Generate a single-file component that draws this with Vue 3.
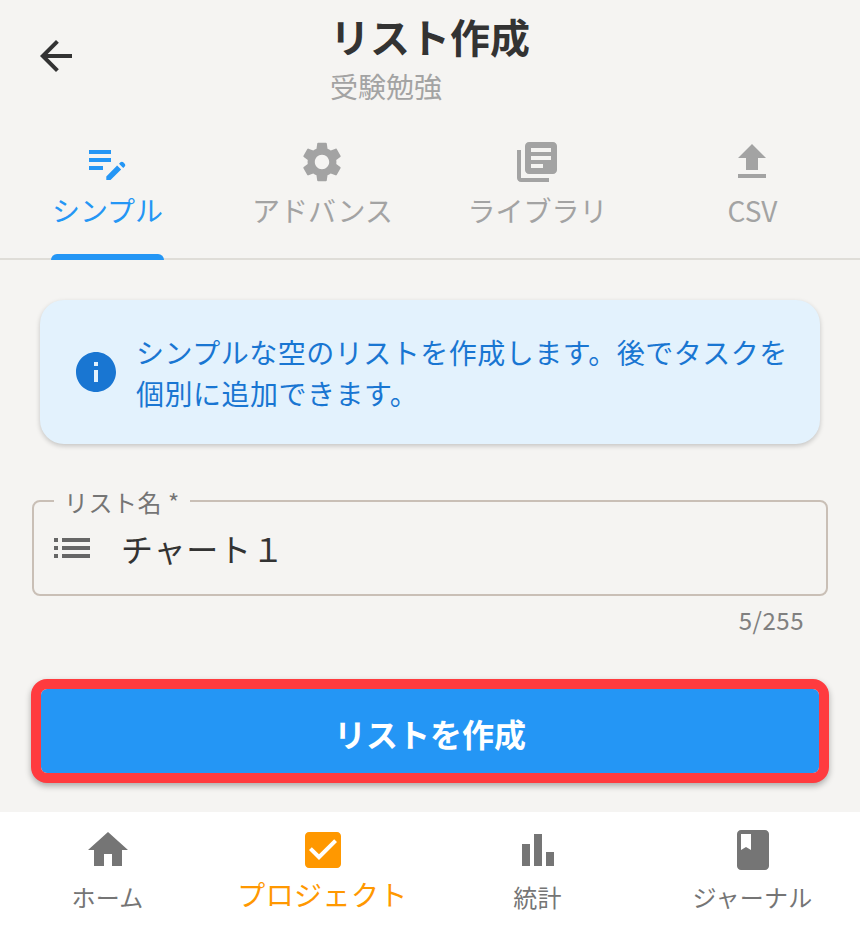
<template>
  <div class="page">
    <header class="top">
      <button class="back" aria-label="戻る">
        <svg viewBox="0 0 24 24" class="ic"><path :d="icons.back" /></svg>
      </button>
      <div class="titles">
        <h1>リスト作成</h1>
        <p>受験勉強</p>
      </div>
    </header>

    <nav class="tabs">
      <div v-for="t in tabs" :key="t.label" class="tab" :class="{ active: t.active }">
        <svg viewBox="0 0 24 24" class="ic"><path :d="t.icon" /></svg>
        <span>{{ t.label }}</span>
        <i v-if="t.active" class="bar"></i>
      </div>
    </nav>

    <main class="content">
      <section class="info">
        <svg viewBox="0 0 24 24" class="ic"><path :d="icons.info" /></svg>
        <p>シンプルな空のリストを作成します。後でタスクを個別に追加できます。</p>
      </section>

      <div class="field">
        <label>リスト名 *</label>
        <svg viewBox="0 0 24 24" class="ic"><path :d="icons.list" /></svg>
        <span class="value">チャート１</span>
      </div>
      <div class="count">5/255</div>

      <button class="submit">リストを作成</button>
    </main>

    <footer class="nav">
      <div v-for="n in nav" :key="n.label" class="nav-item" :class="{ on: n.on }">
        <svg viewBox="0 0 24 24" class="ic"><path :d="n.icon" /></svg>
        <span>{{ n.label }}</span>
      </div>
    </footer>
  </div>
</template>

<script setup>
const icons = {
  back: 'M20 11H7.83l5.59-5.59L12 4l-8 8 8 8 1.41-1.41L7.83 13H20v-2z',
  info: 'M12 2C6.48 2 2 6.48 2 12s4.48 10 10 10 10-4.48 10-10S17.52 2 12 2zm1 15h-2v-6h2v6zm0-8h-2V7h2v2z',
  list: 'M3 13h2v-2H3v2zm0 4h2v-2H3v2zm0-8h2V7H3v2zm4 4h14v-2H7v2zm0 4h14v-2H7v2zM7 7v2h14V7H7z'
}

const tabs = [
  {
    label: 'シンプル',
    active: true,
    icon: 'M3 10h11v2H3v-2zm0-2h11V6H3v2zm0 8h7v-2H3v2zm15.01-3.13.71-.71c.39-.39 1.02-.39 1.41 0l.71.71c.39.39.39 1.02 0 1.41l-.71.71-2.12-2.12zm-1.06 1.06-5.3 5.3V21h2.12l5.3-5.3-2.12-2.12z'
  },
  {
    label: 'アドバンス',
    icon: 'M19.14 12.94c.04-.3.06-.61.06-.94 0-.32-.02-.64-.07-.94l2.03-1.58c.18-.14.23-.41.12-.61l-1.92-3.32c-.12-.22-.37-.29-.59-.22l-2.39.96c-.5-.38-1.03-.7-1.62-.94l-.36-2.54c-.04-.24-.24-.41-.48-.41h-3.84c-.24 0-.43.17-.47.41l-.36 2.54c-.59.24-1.13.57-1.62.94l-2.39-.96c-.22-.08-.47 0-.59.22L2.74 8.87c-.12.21-.08.47.12.61l2.03 1.58c-.05.3-.09.63-.09.94s.02.64.07.94l-2.03 1.58c-.18.14-.23.41-.12.61l1.92 3.32c.12.22.37.29.59.22l2.39-.96c.5.38 1.03.7 1.62.94l.36 2.54c.05.24.24.41.48.41h3.84c.24 0 .44-.17.47-.41l.36-2.54c.59-.24 1.13-.56 1.62-.94l2.39.96c.22.08.47 0 .59-.22l1.92-3.32c.12-.22.07-.47-.12-.61l-2.01-1.58zM12 15.6c-1.98 0-3.6-1.62-3.6-3.6s1.62-3.6 3.6-3.6 3.6 1.62 3.6 3.6-1.62 3.6-3.6 3.6z'
  },
  {
    label: 'ライブラリ',
    icon: 'M4 6H2v14c0 1.1.9 2 2 2h14v-2H4V6zm16-4H8c-1.1 0-2 .9-2 2v12c0 1.1.9 2 2 2h12c1.1 0 2-.9 2-2V4c0-1.1-.9-2-2-2zm-1 9H9V9h10v2zm-4 4H9v-2h6v2zm4-8H9V5h10v2z'
  },
  { label: 'CSV', icon: 'M9 16h6v-6h4l-7-7-7 7h4zm-4 2h14v2H5z' }
]

const nav = [
  { label: 'ホーム', icon: 'M10 20v-6h4v6h5v-8h3L12 3 2 12h3v8z' },
  {
    label: 'プロジェクト',
    on: true,
    icon: 'M19 3H5c-1.11 0-2 .9-2 2v14c0 1.1.89 2 2 2h14c1.11 0 2-.9 2-2V5c0-1.1-.89-2-2-2zm-9 14l-5-5 1.41-1.41L10 14.17l7.59-7.59L19 8l-9 9z'
  },
  { label: '統計', icon: 'M4 9h4v11H4zm12 4h4v7h-4zm-6-9h4v16h-4z' },
  {
    label: 'ジャーナル',
    icon: 'M18 2H6c-1.1 0-2 .9-2 2v16c0 1.1.9 2 2 2h12c1.1 0 2-.9 2-2V4c0-1.1-.9-2-2-2zM6 4h5v8l-2.5-1.5L6 12V4z'
  }
]
</script>

<style scoped>
.page {
  height: 928px;
  display: flex;
  flex-direction: column;
  background: #f5f4f2;
  font-family: "Noto Sans CJK JP", sans-serif;
  color: #333;
  overflow: hidden;
}
.ic {
  width: 48px;
  height: 48px;
  fill: currentColor;
  flex: none;
  display: block;
}
.top {
  height: 124px;
  display: grid;
  grid-template-columns: 1fr auto 1fr;
  align-items: start;
}
.back {
  width: 48px;
  height: 48px;
  margin: 32px 0 0 32px;
  padding: 0;
  border: 0;
  background: none;
  color: #333;
}
.titles {
  padding-top: 7px;
}
.titles h1 {
  margin: 0;
  font-size: 40px;
  line-height: 59px;
  font-weight: 700;
}
.titles p {
  margin: 0;
  font-size: 28px;
  line-height: 40px;
  color: #a3a3a3;
}
.tabs {
  height: 136px;
  display: grid;
  grid-template-columns: repeat(4, 215px);
  border-bottom: 2px solid #dfddd8;
  box-sizing: border-box;
}
.tab {
  position: relative;
  display: flex;
  flex-direction: column;
  align-items: center;
  padding-top: 14px;
  color: #a3a3a3;
  font-size: 28px;
  line-height: 48px;
}
.tab .ic {
  margin-left: -1px;
}
.tab.active {
  color: #2496f5;
}
.bar {
  position: absolute;
  left: 51px;
  width: 113px;
  bottom: -2px;
  height: 6px;
  background: #2496f5;
  border-radius: 6px 6px 0 0;
}
.content {
  flex: 1;
  padding: 40px 31px 0;
}
.info {
  margin: 0 9px;
  height: 144px;
  box-sizing: border-box;
  padding: 0 20px 0 32px;
  display: flex;
  align-items: center;
  gap: 16px;
  background: #e3f2fd;
  border-radius: 24px;
  box-shadow: 0 2px 5px rgba(0, 0, 0, 0.2);
  color: #1976d2;
}
.info p {
  margin: 1px 0 0;
  font-size: 28px;
  line-height: 41px;
  letter-spacing: 0.5px;
}
.field {
  position: relative;
  margin: 56px 1px 0;
  height: 96px;
  box-sizing: border-box;
  border: 2px solid #c9bfb6;
  border-radius: 8px;
  display: flex;
  align-items: center;
  padding-left: 14px;
  color: #666;
}
.field label {
  position: absolute;
  left: 20px;
  top: -15px;
  padding: 0 10px;
  background: #f5f4f2;
  font-size: 24px;
  line-height: 30px;
  letter-spacing: 0.5px;
  color: #757575;
}
.value {
  margin-left: 25px;
  font-size: 32px;
  letter-spacing: 0.8px;
  color: #333;
}
.count {
  margin-top: 6px;
  padding-right: 25px;
  text-align: right;
  font-size: 24px;
  line-height: 36px;
  letter-spacing: 0.5px;
  color: #808080;
}
.submit {
  display: block;
  width: 798px;
  height: 104px;
  margin-top: 41px;
  padding: 4px 0 0;
  border: 10px solid #ff3b3f;
  border-radius: 16px;
  background: #2496f5;
  background-clip: padding-box;
  color: #fff;
  font: 700 32px "Noto Sans CJK JP", sans-serif;
  box-shadow: 0 3px 6px rgba(0, 0, 0, 0.3);
}
.nav {
  height: 116px;
  background: #fff;
  display: grid;
  grid-template-columns: repeat(4, 215px);
}
.nav-item {
  display: flex;
  flex-direction: column;
  align-items: center;
  padding-top: 14px;
  color: #757575;
  font-size: 24px;
  line-height: 46px;
}
.nav-item span {
  letter-spacing: 0.2px;
}
.nav-item.on {
  color: #ff9800;
  font-size: 28px;
  line-height: 40px;
}
.nav-item.on span {
  letter-spacing: 0.4px;
}
</style>

<style>
html, body {
  margin: 0;
  background: #f5f4f2;
}
</style>
